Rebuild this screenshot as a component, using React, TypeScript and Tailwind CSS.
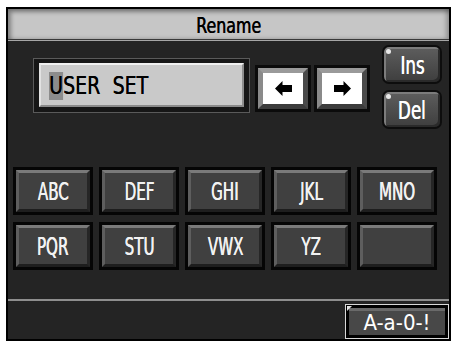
import type { ReactNode } from 'react';

const FONT = "font-['DejaVu_Sans_Condensed','DejaVu_Sans',sans-serif]";

const KEYS = ['ABC', 'DEF', 'GHI', 'JKL', 'MNO', 'PQR', 'STU', 'VWX', 'YZ', ''];

function Label({ children, className = '' }: { children: ReactNode; className?: string }) {
  return (
    <span className={`${FONT} inline-block origin-center leading-none ${className}`}>
      {children}
    </span>
  );
}

function ArrowIcon({ dir }: { dir: 'left' | 'right' }) {
  return (
    <svg width="17" height="15" viewBox="0 0 17 15" className={dir === 'right' ? 'rotate-180' : ''}>
      <path d="M0 7.5 L7.5 0 L7.5 4 L17 4 L17 11 L7.5 11 L7.5 15 Z" fill="#000" />
    </svg>
  );
}

function ArrowButton({ dir }: { dir: 'left' | 'right' }) {
  return (
    <div className="h-[47px] w-[56px] border-[3px] border-[#0b0b0b] bg-[#111]">
      <div className="flex h-full w-full border-[5px] border-t-[#9a9a9a] border-l-[#8a8a8a] border-r-[#4a4a4a] border-b-[#3c3c3c]">
        <div className="flex flex-1 items-center justify-center bg-white">
          <ArrowIcon dir={dir} />
        </div>
      </div>
    </div>
  );
}

function RoundButton({ label }: { label: string }) {
  return (
    <div className="relative flex h-[39px] w-[60px] items-center justify-center rounded-[7px] border-2 border-[#0d0d0d] bg-gradient-to-b from-[#5e5e5e] to-[#3e3e3e] shadow-[inset_2px_2px_0_#7c7c7c,inset_-2px_-2px_0_#2a2a2a]">
      <span className="absolute left-[2px] top-[2px] h-[5px] w-[5px] rounded-full bg-[#e8e8e8]" />
      <Label className="mt-[1px] scale-x-[0.74] text-[25px] text-white [text-shadow:0.6px_0_0_#fff]">{label}</Label>
    </div>
  );
}

function Key({ label }: { label: string }) {
  return (
    <div className="h-[48px] w-[80px] border-[3px] border-[#050505] bg-black">
      <div className="flex h-full w-full items-center justify-center border-[3px] border-t-[#7a7a7a] border-l-[#5e5e5e] border-r-[#262626] border-b-[#1e1e1e] bg-[#404040]">
        <Label className="mt-[1px] scale-x-[0.7] text-[24px] text-[#f2f2f2] [text-shadow:0.6px_0_0_#f2f2f2]">{label}</Label>
      </div>
    </div>
  );
}

export default function App() {
  return (
    <div className="h-[343px] w-[454px] bg-white pl-[6px] pt-[7px]">
      <div className="flex h-[334px] w-[445px] flex-col border-2 border-black bg-[#242424]">
        <div className="flex h-[30px] items-center justify-center bg-[#c6c6c6] shadow-[inset_3px_3px_4px_rgba(0,0,0,0.35),inset_-3px_0_4px_rgba(0,0,0,0.25)]">
          <Label className="mt-[3px] scale-x-[0.8] text-[22px] text-black [text-shadow:0.5px_0_0_#000]">Rename</Label>
        </div>
        <div className="h-[1px] bg-[#3a3a3a]" />
        <div className="h-[1px] bg-[#a6a6a6]" />

        <div className="flex flex-1 flex-col pl-[5px] pt-[4px]">
          <div className="flex items-start">
            <div className="ml-[20px] mt-[13px] h-[55px] w-[217px] border border-[#5a5a5a] bg-[#161616] px-[5px] pb-[5px] pt-[4px]">
              <div className="flex h-full w-full items-center border-2 border-t-[#efefef] border-l-[#e2e2e2] border-r-[#8e8e8e] border-b-[#8a8a8a] bg-[#c9c9c9] pl-[8px]">
                <span className={`${FONT} mt-[2px] inline-block origin-left scale-x-[0.88] whitespace-pre text-[24px] leading-none text-black [word-spacing:7px] [text-shadow:0.4px_0_0_#000]`}>
                  <span className="bg-[#8c8c8c]">U</span>SER SET
                </span>
              </div>
            </div>
            <div className="ml-[5px] mt-[20px] flex gap-[3px]">
              <ArrowButton dir="left" />
              <ArrowButton dir="right" />
            </div>
            <div className="ml-[12px] flex flex-col gap-[6px]">
              <RoundButton label="Ins" />
              <RoundButton label="Del" />
            </div>
          </div>

          <div className="mt-[38px] grid w-[424px] grid-cols-5 gap-x-[6px] gap-y-[7px]">
            {KEYS.map((k, i) => (
              <Key key={i} label={k} />
            ))}
          </div>
        </div>

        <div className="h-[2px] bg-[#8e8e8e]" />
        <div className="flex h-[38px] items-end justify-end">
          <div className="relative h-[35px] w-[104px] border border-[#d8d8d8] bg-black p-[3px]">
            <span className="absolute left-[1px] top-[1px] h-0 w-0 border-b-[5px] border-l-[5px] border-b-transparent border-l-[#e0e0e0]" />
            <div className="flex h-full w-full items-center justify-center bg-[#484848] shadow-[inset_0_3px_0_#6a6a6a]">
              <Label className="mt-[2px] text-[22px] font-light text-white">A-a-0-!</Label>
            </div>
          </div>
        </div>
      </div>
    </div>
  );
}
